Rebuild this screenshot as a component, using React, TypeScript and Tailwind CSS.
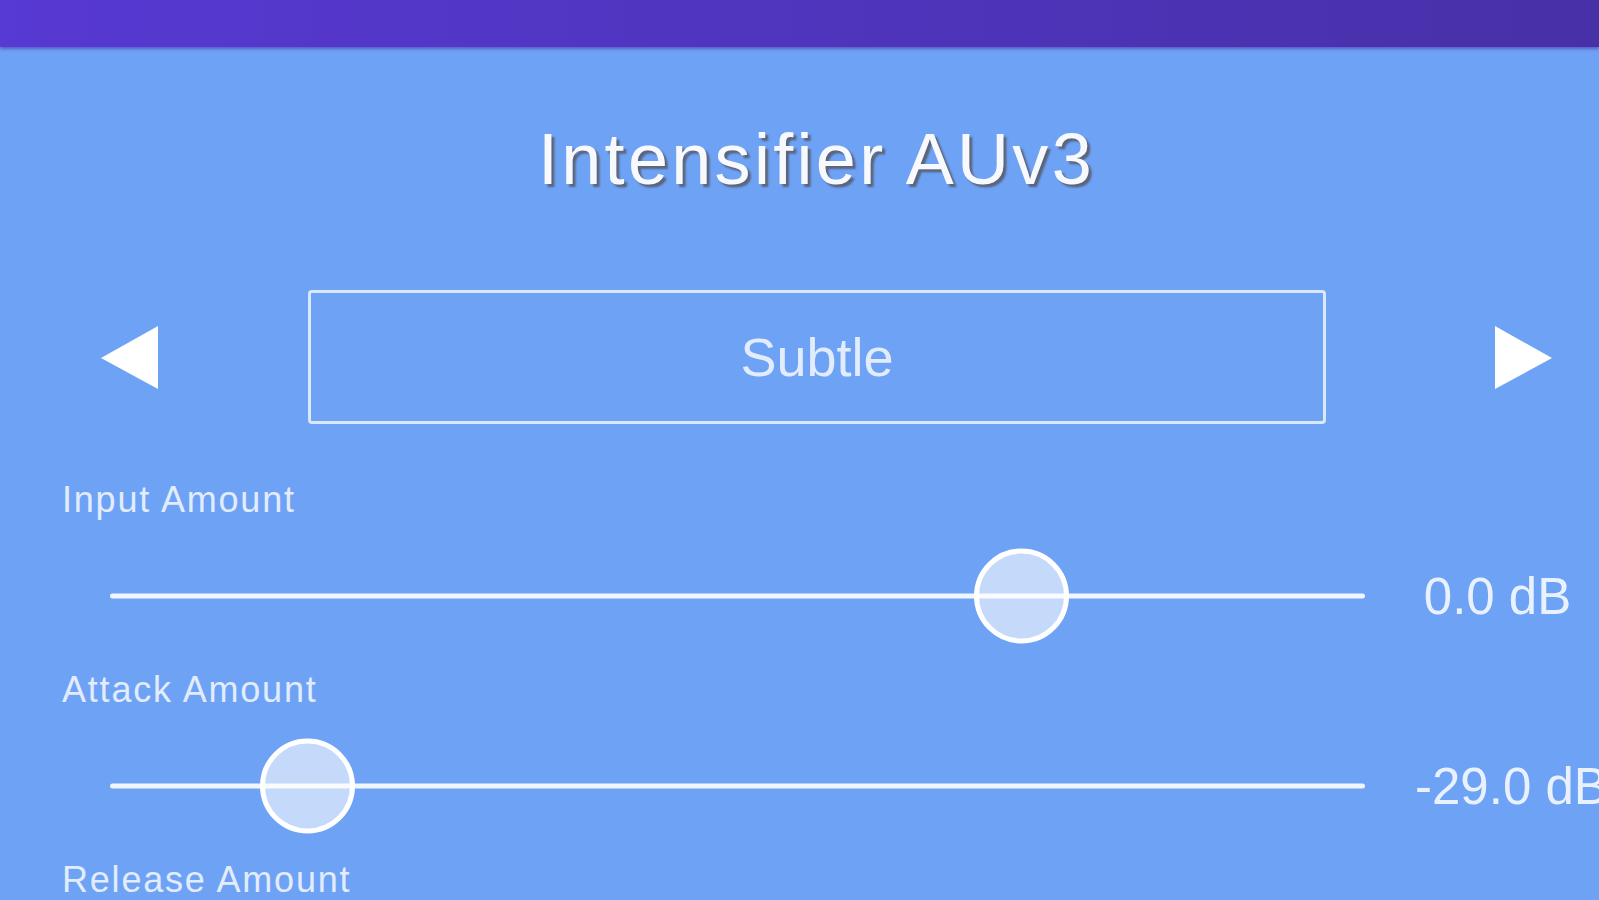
import React from 'react'

const sliders = [
  { label: 'Input Amount', value: '0.0 dB', pos: 863.5 },
  { label: 'Attack Amount', value: '-29.0 dB', pos: 149.5 },
  { label: 'Release Amount', value: '250 ms', pos: 420 },
]

function Arrow({ dir }: { dir: 'left' | 'right' }) {
  return (
    <svg width="57" height="63" viewBox="0 0 57 63" className="shrink-0">
      {dir === 'left' ? (
        <polygon points="0,32 57,0 57,63" fill="#ffffff" />
      ) : (
        <polygon points="0,0 57,32 0,63" fill="#ffffff" />
      )}
    </svg>
  )
}

export default function App() {
  return (
    <div className="h-screen overflow-hidden bg-[#6ea2f5] font-['Liberation_Sans',Arial,sans-serif] text-white">
      <div className="relative z-10 h-[47px] bg-linear-to-r from-[#5739d3] to-[#4830a8] shadow-[0_2px_3px_rgba(70,40,160,0.55)]" />

      <h1 className="mt-[76px] h-[72px] pl-[34px] text-center text-[72px] leading-none tracking-[3.3px] text-[#f7f9fd] [text-shadow:3px_3px_2px_rgba(85,85,95,0.8)]">
        Intensifier AUv3
      </h1>

      <div className="mt-[95px] flex h-[134px] items-center pl-[101px]">
        <Arrow dir="left" />
        <div className="ml-[150px] flex h-[134px] w-[1018px] shrink-0 items-center justify-center rounded-[4px] border-[3px] border-white/75">
          <span className="text-[54px] leading-none text-white/80">Subtle</span>
        </div>
        <div className="ml-[169px]">
          <Arrow dir="right" />
        </div>
      </div>

      <div className="mt-[58px]">
        {sliders.map((s) => (
          <div key={s.label} className="mb-[28px]">
            <div className="h-[38px] pl-[62px] text-[36px] leading-none tracking-[1.8px] text-white/80">
              {s.label}
            </div>
            <div className="mt-[28px] flex h-[96px] items-center">
              <div className="relative ml-[110px] h-[96px] w-[1255px] shrink-0">
                <div
                  className="absolute top-1/2 h-[95px] w-[95px] -translate-y-1/2 rounded-full border-[5px] border-white bg-white/60"
                  style={{ left: s.pos }}
                />
                <div className="absolute left-0 top-1/2 h-[5px] w-full -translate-y-1/2 rounded-full bg-white/90" />
              </div>
              <div className="ml-[50px] w-[165px] shrink-0 whitespace-nowrap text-center text-[51px] leading-none text-white/85">
                {s.value}
              </div>
            </div>
          </div>
        ))}
      </div>
    </div>
  )
}
